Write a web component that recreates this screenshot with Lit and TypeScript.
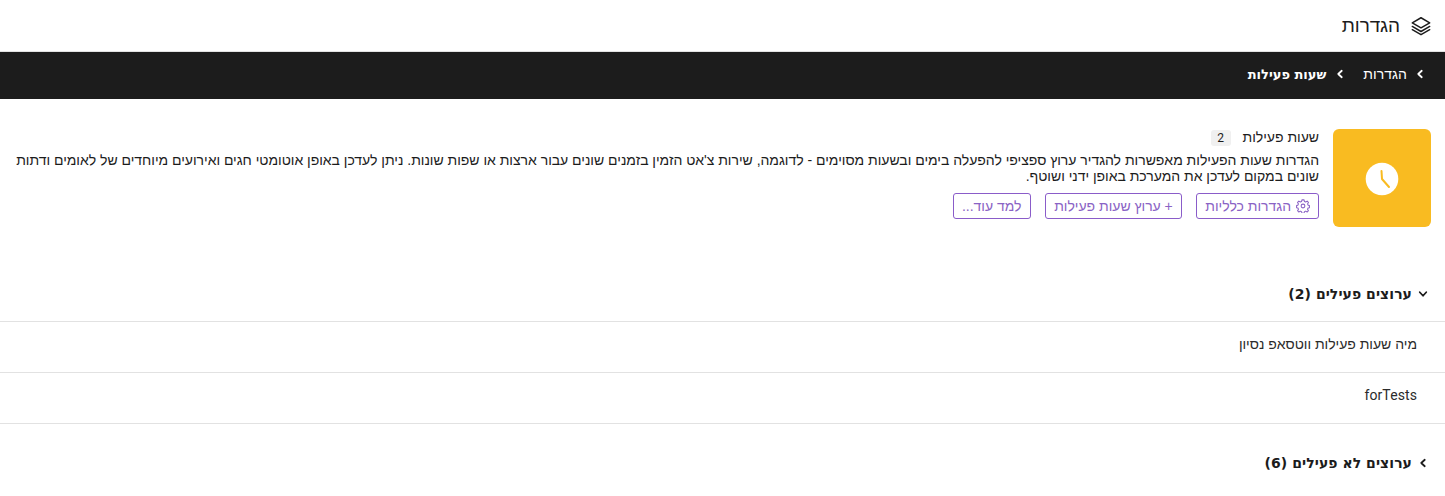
import { LitElement, html, css, svg } from "lit";
import { customElement } from "lit/decorators.js";

const chevron = (dir: "left" | "down") => html`<svg class="chev" viewBox="0 0 10 10" width="10" height="10">
  <path d=${dir === "left" ? "M6.750 1.750 3.250 5l3.500 3.250" : "M1.750 3.250 5 6.750l3.250-3.500"} fill="none" stroke="currentColor" stroke-width="1.800" stroke-linecap="round" stroke-linejoin="round"/>
</svg>`;

@customElement("app-root")
export class AppRoot extends LitElement {
  static styles = css`
    :host { display: block; width: 1445px; height: 496px; overflow: hidden; background: #fff; color: #1c1c1c; font-family: "Liberation Sans", sans-serif; font-size: 14px; letter-spacing: -0.017px; }
    .page { direction: rtl; background: #fff; }
    .top { height: 51px; display: flex; align-items: center; gap: 10px; padding: 0 13px; font-size: 19px; letter-spacing: -0.1px; border-bottom: 1px solid #e2e2e2; }
    .top svg { display: block; }
    .crumbs { height: 47px; padding-bottom: 3px; box-sizing: border-box; background: #1c1c1c; color: #fff; display: flex; align-items: center; padding-right: 20px; font-size: 14px; letter-spacing: 0.05px; }
    .crumbs .chev { margin-left: 8px; }
    .crumbs .link { margin-left: 18px; }
    .crumbs b { font-weight: 700; font-family: "DejaVu Sans", sans-serif; font-size: 13px; letter-spacing: 0; margin-right: 1px; }
    .hero { display: flex; gap: 14px; padding: 30px 14px 0 0; height: 129px; box-sizing: border-box; }
    .tile { width: 98px; height: 98px; flex: none; border-radius: 6px; background: #f9bb21; display: flex; align-items: center; justify-content: center; }
    .tile svg { display: block; margin-top: 1px; }
    .body { flex: 1; min-width: 0; padding-left: 12px; }
    .title { display: flex; align-items: center; gap: 12px; height: 17px; }
    .title .name { margin-top: -1px; }
    .badge { width: 20px; height: 16px; background: #f0f0f0; border-radius: 3px; font-family: "Roboto", sans-serif; font-size: 12px; display: flex; align-items: center; justify-content: center; }
    .desc { margin: 6px 0 9px; line-height: 16px; }
    .actions { display: flex; gap: 14px; }
    .btn { height: 26px; box-sizing: border-box; border: 1px solid #8a5cc9; border-radius: 3px; color: #8a63c5; padding: 0 8px; display: flex; align-items: center; gap: 5px; background: #fff; }
    .btn.wide { padding: 0 8.500px; }
    .btn.more { padding: 0 8.250px; }
    .section { display: flex; align-items: center; gap: 6px; padding-right: 17px; font-weight: 700; font-family: "DejaVu Sans", sans-serif; font-size: 14px; letter-spacing: 0.05px; }
    .active { height: 58px; margin-top: 36px; box-sizing: border-box; border-bottom: 1px solid #e2e2e2; padding-top: 2px; }
    .row { height: 51px; box-sizing: border-box; display: flex; align-items: center; padding: 0 28px 7px 0; border-bottom: 1px solid #e2e2e2; color: #2b2b2b; }
    .latin { font-family: "Roboto", sans-serif; letter-spacing: 0.1px; }
    .inactive { height: 80px; padding-bottom: 2px; box-sizing: border-box; }
  `;

  render() {
    return html`<div class="page">
      <div class="top">
        <svg width="22" height="22" viewBox="0 0 24 24" fill="none" stroke="currentColor" stroke-width="1.600" stroke-linejoin="round" stroke-linecap="round">
          ${svg`<path d="M12 3 2.500 8.500 12 14l9.500-5.500z"/><path d="M2.500 12.500 12 18l9.500-5.500"/><path d="M2.500 16 12 21.500l9.500-5.500"/>`}
        </svg>
        <span>הגדרות</span>
      </div>
      <div class="crumbs">
        ${chevron("left")}<span class="link">הגדרות</span>${chevron("left")}<b>שעות פעילות</b>
      </div>
      <div class="hero">
        <div class="tile">
          <svg width="34" height="34" viewBox="0 0 34 34">
            <circle cx="17" cy="17" r="16.300" fill="#fff"/>
            <path d="M16.500 9 17 17l7 8" fill="none" stroke="#f9bb21" stroke-width="2" stroke-linecap="round" stroke-linejoin="round"/>
          </svg>
        </div>
        <div class="body">
          <div class="title"><span class="name">שעות פעילות</span><span class="badge">2</span></div>
          <div class="desc">הגדרות שעות הפעילות מאפשרות להגדיר ערוץ ספציפי להפעלה בימים ובשעות מסוימים - לדוגמה, שירות צ'אט הזמין בזמנים שונים עבור ארצות או שפות שונות. ניתן לעדכן באופן אוטומטי חגים ואירועים מיוחדים של לאומים ודתות שונים במקום לעדכן את המערכת באופן ידני ושוטף.</div>
          <div class="actions">
            <div class="btn">
              <svg width="14" height="14" viewBox="0 0 24 24" fill="none" stroke="currentColor" stroke-width="1.800" stroke-linejoin="round">
                ${svg`<circle cx="12" cy="12" r="3.200"/><path d="M10.200 1.500h3.600l.7 2.800 2.100.9 2.500-1.500 2.200 2.200-1.500 2.500.9 2.100 2.300.7v3.600l-2.300.7-.9 2.100 1.500 2.500-2.200 2.200-2.500-1.500-2.100.9-.7 2.800h-3.600l-.7-2.800-2.100-.9-2.500 1.500-2.200-2.200 1.500-2.500-.9-2.100-2.300-.7v-3.600l2.300-.7.9-2.100-1.500-2.500 2.200-2.200 2.500 1.500 2.100-.9z"/>`}
              </svg>
              <span>הגדרות כלליות</span>
            </div>
            <div class="btn wide"><span>+ ערוץ שעות פעילות</span></div>
            <div class="btn more"><span>למד עוד...</span></div>
          </div>
        </div>
      </div>
      <div class="section active">${chevron("down")}<span>ערוצים פעילים (2)</span></div>
      <div class="row">מיה שעות פעילות ווטסאפ נסיון</div>
      <div class="row"><span class="latin">forTests</span></div>
      <div class="section inactive">${chevron("left")}<span>ערוצים לא פעילים (6)</span></div>
    </div>`;
  }
}
